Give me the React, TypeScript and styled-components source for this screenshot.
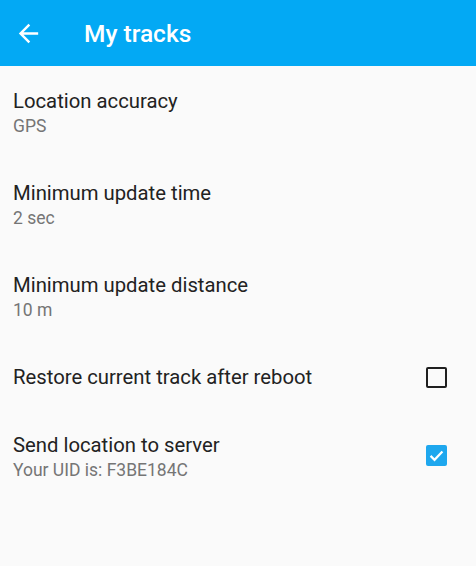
import React from "react";
import styled, { createGlobalStyle } from "styled-components";

const Global = createGlobalStyle`
  html, body { margin: 0; padding: 0; background: #fafafa; }
  body { font-family: Roboto, "Noto Sans", sans-serif; }
`;

const Page = styled.div`
  width: 476px;
  height: 566px;
  background: #fafafa;
  display: flex;
  flex-direction: column;
  overflow: hidden;
`;

const AppBar = styled.header`
  height: 66px;
  background: #03a9f4;
  display: flex;
  align-items: center;
  padding-left: 14px;
  box-sizing: border-box;
  flex-shrink: 0;
`;

const BackButton = styled.div`
  width: 29px;
  height: 29px;
  display: flex;
  align-items: center;
  justify-content: center;
  margin-right: 41px;
`;

const Title = styled.h1`
  margin: 0;
  color: #ffffff;
  font-size: 24.5px;
  font-weight: 500;
`;

const List = styled.div`
  display: flex;
  flex-direction: column;
`;

const Row = styled.div`
  display: flex;
  align-items: center;
  padding: 23px 29px 21px 13px;
`;

const Texts = styled.div`
  flex: 1;
  display: flex;
  flex-direction: column;
`;

const RowTitle = styled.div`
  color: #222222;
  font-size: 20.3px;
  line-height: 24px;
`;

const Summary = styled.div`
  color: #757575;
  font-size: 17.5px;
  line-height: 22px;
  margin-top: 2px;
`;

const Box = styled.div<{ $checked: boolean }>`
  width: 21px;
  height: 21px;
  box-sizing: border-box;
  border-radius: 2px;
  border: ${(p) => (p.$checked ? "none" : "2.5px solid #1f1f1f")};
  background: ${(p) => (p.$checked ? "#1ea7ee" : "transparent")};
  display: flex;
  align-items: center;
  justify-content: center;
  margin-bottom: ${(p) => (p.$checked ? "3px" : "0")};
`;

const Check = () => (
  <svg width="19" height="19" viewBox="0 0 24 24">
    <path d="M4.5 12.5l5 5L19.5 7" fill="none" stroke="#fff" strokeWidth="2.8" />
  </svg>
);

type Item = { title: string; summary?: string; checkbox?: boolean };

const items: Item[] = [
  { title: "Location accuracy", summary: "GPS" },
  { title: "Minimum update time", summary: "2 sec" },
  { title: "Minimum update distance", summary: "10 m" },
  { title: "Restore current track after reboot", checkbox: false },
  { title: "Send location to server", summary: "Your UID is: F3BE184C", checkbox: true },
];

export default function App() {
  return (
    <Page>
      <Global />
      <AppBar>
        <BackButton>
          <svg width="29" height="29" viewBox="0 0 24 24">
            <path
              d="M20 11H7.83l5.59-5.59L12 4l-8 8 8 8 1.41-1.41L7.83 13H20v-2z"
              fill="#ffffff"
            />
          </svg>
        </BackButton>
        <Title>My tracks</Title>
      </AppBar>
      <List>
        {items.map((it) => (
          <Row key={it.title}>
            <Texts>
              <RowTitle>{it.title}</RowTitle>
              {it.summary && <Summary>{it.summary}</Summary>}
            </Texts>
            {it.checkbox !== undefined && (
              <Box $checked={it.checkbox}>{it.checkbox && <Check />}</Box>
            )}
          </Row>
        ))}
      </List>
    </Page>
  );
}
